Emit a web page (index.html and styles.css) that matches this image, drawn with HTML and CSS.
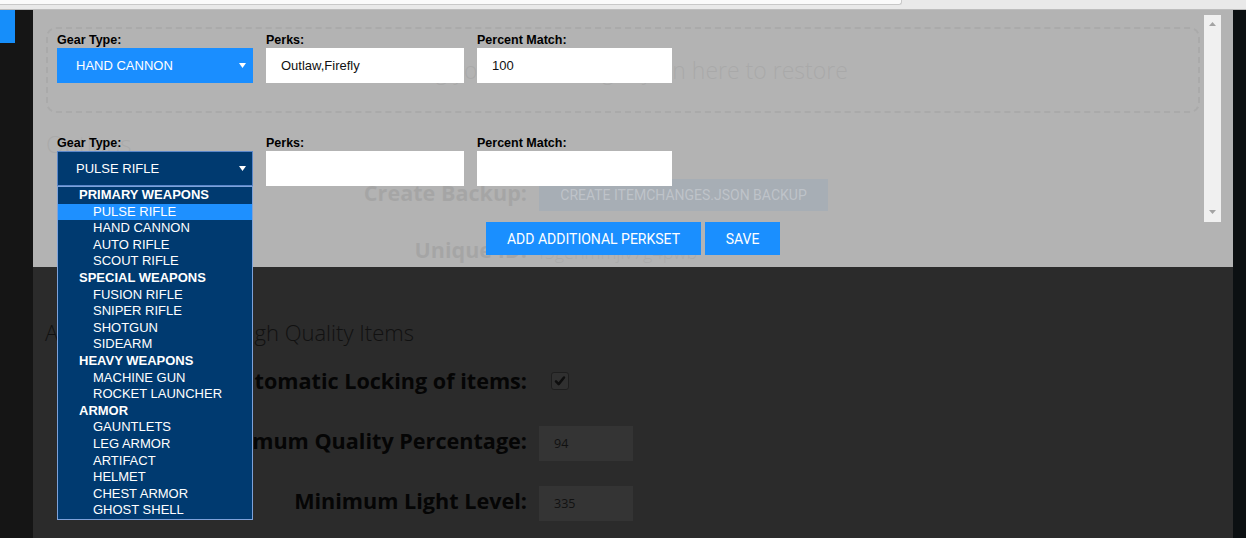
FILE: index.html
```html
<!DOCTYPE html>
<html lang="en">
<head>
<meta charset="utf-8">
<title>Item Locker Options</title>
<link rel="stylesheet" href="styles.css">
</head>
<body>
<div class="browser-bar"><div class="address"></div></div>
<div class="app">
  <aside class="sidebar"><div class="side-tab"></div></aside>
  <main class="page">
    <div class="dropzone">Drag your itemchanges.json here to restore</div>
    <h2 class="section-title">Options</h2>
    <div class="form-row backup-row">
      <label class="form-label">Create Backup:</label>
      <button class="btn-muted">CREATE ITEMCHANGES.JSON BACKUP</button>
    </div>
    <div class="form-row uid-row">
      <label class="form-label">Unique ID:</label>
      <span class="uid">f5gehmmjlv7g4pwb</span>
    </div>
    <h2 class="section-title lock-title">Automatically Lock High Quality Items</h2>
    <div class="form-row lock-row">
      <label class="form-label">Automatic Locking of items:</label>
      <span class="checkbox"><svg width="18" height="18" viewBox="0 0 18 18"><path d="M4.5 9.5 L7.5 12.5 L13.5 5" fill="none" stroke="#0e0e0e" stroke-width="2.8" stroke-linecap="round" stroke-linejoin="round"/></svg></span>
    </div>
    <div class="form-row quality-row">
      <label class="form-label">Minimum Quality Percentage:</label>
      <input class="num-input" type="text" value="94">
    </div>
    <div class="form-row light-row">
      <label class="form-label">Minimum Light Level:</label>
      <input class="num-input" type="text" value="335">
    </div>

    <div class="modal">
      <div class="modal-body">
        <div class="perksets">
          <div class="perkset">
            <div class="field field-gear">
              <div class="field-label">Gear Type:</div>
              <div class="select select-active"><span>HAND CANNON</span><svg class="caret" width="7" height="5" viewBox="0 0 7 5"><path d="M0 0 H7 L3.5 5 Z" fill="#fff"/></svg></div>
            </div>
            <div class="field field-perks">
              <div class="field-label">Perks:</div>
              <input class="text-input" type="text" value="Outlaw,Firefly">
            </div>
            <div class="field field-pct">
              <div class="field-label">Percent Match:</div>
              <input class="text-input" type="text" value="100">
            </div>
          </div>
          <div class="perkset">
            <div class="field field-gear">
              <div class="field-label">Gear Type:</div>
              <div class="select select-open"><span>PULSE RIFLE</span><svg class="caret" width="7" height="5" viewBox="0 0 7 5"><path d="M0 0 H7 L3.5 5 Z" fill="#fff"/></svg></div>
              <ul class="select-menu">
                <li class="grp">PRIMARY WEAPONS</li>
                <li class="opt selected">PULSE RIFLE</li>
                <li class="opt">HAND CANNON</li>
                <li class="opt">AUTO RIFLE</li>
                <li class="opt">SCOUT RIFLE</li>
                <li class="grp">SPECIAL WEAPONS</li>
                <li class="opt">FUSION RIFLE</li>
                <li class="opt">SNIPER RIFLE</li>
                <li class="opt">SHOTGUN</li>
                <li class="opt">SIDEARM</li>
                <li class="grp">HEAVY WEAPONS</li>
                <li class="opt">MACHINE GUN</li>
                <li class="opt">ROCKET LAUNCHER</li>
                <li class="grp">ARMOR</li>
                <li class="opt">GAUNTLETS</li>
                <li class="opt">LEG ARMOR</li>
                <li class="opt">ARTIFACT</li>
                <li class="opt">HELMET</li>
                <li class="opt">CHEST ARMOR</li>
                <li class="opt">GHOST SHELL</li>
              </ul>
            </div>
            <div class="field field-perks">
              <div class="field-label">Perks:</div>
              <input class="text-input" type="text" value="">
            </div>
            <div class="field field-pct">
              <div class="field-label">Percent Match:</div>
              <input class="text-input" type="text" value="">
            </div>
          </div>
        </div>
        <div class="scrollbar">
          <svg width="7" height="4" viewBox="0 0 7 4"><path d="M0 4 L3.5 0 L7 4 Z" fill="#a3a3a3"/></svg>
          <svg width="7" height="4" viewBox="0 0 7 4"><path d="M0 0 L7 0 L3.5 4 Z" fill="#a3a3a3"/></svg>
        </div>
      </div>
      <div class="modal-actions">
        <button class="btn btn-add">ADD ADDITIONAL PERKSET</button>
        <button class="btn btn-save">SAVE</button>
      </div>
    </div>
  </main>
  <aside class="rail"></aside>
</div>
</body>
</html>
```
FILE: styles.css
```css
* { box-sizing: border-box; margin: 0; padding: 0; }
html, body { width: 1246px; height: 538px; overflow: hidden; }
body { background: #151515; font-family: "Open Sans", sans-serif; color: #111; }

.browser-bar { height: 10px; background: #e9e9e9; border-bottom: 1px solid #bdbdbd; }
.address { width: 902px; height: 5px; background: #fafafa; border-bottom: 1px solid #c8c8c8; border-right: 1px solid #c8c8c8; border-bottom-right-radius: 3px; }

.app { display: flex; height: 528px; }
.sidebar { width: 33px; background: #151515; }
.side-tab { width: 15px; height: 33px; background: #168efa; }
.rail { flex: 1; background: #0c1012; }

.page { position: relative; width: 1200px; background: #2b2b2b; padding: 17px 0 0 13px; }

.dropzone { width: 1154px; height: 86px; border: 2px dashed #111; border-radius: 10px; display: flex; align-items: center; justify-content: center; font-size: 23px; font-weight: 300; color: #0e0e0e; }

.section-title { font-size: 24px; font-weight: 300; line-height: 34px; margin-top: 14px; color: #111; }
.lock-title { font-size: 22px; margin-top: 47px; margin-left: -1px; }

.form-row { display: flex; align-items: center; }
.form-label { width: 481px; text-align: right; font-size: 21.6px; font-weight: 700; margin-right: 12px; margin-bottom: 6px; color: #050505; white-space: nowrap; }
.lock-row .form-label { margin-bottom: 0; }

.backup-row { margin-top: 18px; height: 32px; }
.btn-muted { width: 289px; height: 32px; border: none; background: #0a1c30; color: #4a5868; font-family: Roboto, sans-serif; font-size: 14px; }
.uid-row { margin-top: 25px; height: 32px; }
.uid { font-size: 18px; font-weight: 300; color: #111; }

.lock-row { margin-top: 14px; height: 35px; }
.checkbox { width: 18px; height: 18px; margin-left: 12px; border: 1px solid #1e1e1e; border-radius: 3px; background: #303030; display: flex; align-items: center; justify-content: center; }
.checkbox svg { display: block; }
.quality-row { margin-top: 28px; height: 35px; }
.light-row { margin-top: 25px; height: 35px; }
.num-input { width: 94px; height: 35px; border: none; outline: none; background: #343434; padding-left: 15px; font-family: "Open Sans", sans-serif; font-size: 12.5px; color: #111; }

/* modal */
.modal { position: absolute; top: 0; left: 0; width: 1200px; height: 257px; background: rgba(255, 255, 255, 0.642); padding: 5px 12px 0 0; font-family: "Liberation Sans", Arial, sans-serif; }
.modal-body { display: flex; height: 207px; }
.perksets { flex: 1; padding: 18px 0 0 24px; }
.perkset { display: flex; gap: 13px; }
.perkset + .perkset { margin-top: 53px; }
.field-label { font-size: 12.5px; font-weight: 700; line-height: 15px; color: #000; }
.field-gear { width: 196px; position: relative; }
.field-perks { width: 198px; }
.field-pct { width: 195px; }

.select { height: 35px; display: flex; align-items: center; justify-content: space-between; padding: 0 7px 0 19px; font-size: 13px; color: #fff; }
.select-active { background: #1a8eff; }
.select-open { background: #003a70; border: 1px solid #5b87c9; padding: 0 6px 0 18px; }
.caret { display: block; }

.text-input { display: block; width: 100%; height: 35px; border: none; outline: none; background: #fff; padding-left: 15px; font-family: "Liberation Sans", Arial, sans-serif; font-size: 13px; color: #111; }

.select-menu { position: absolute; top: 100%; left: 0; width: 196px; height: 334px; list-style: none; background: #003a70; border: 1px solid #7ea2da; z-index: 5; }
.select-menu li { height: 16.6px; line-height: 16.6px; font-size: 13px; color: #fff; white-space: nowrap; }
.select-menu .grp { font-weight: 700; padding-left: 21px; }
.select-menu .opt { padding-left: 35px; }
.select-menu .selected { background: #1e90ff; }

.scrollbar { width: 17px; height: 207px; background: #f0f0f0; display: flex; flex-direction: column; justify-content: space-between; align-items: center; padding: 7px 0 8px; }
.scrollbar svg { display: block; }

.modal-actions { display: flex; gap: 4px; padding-left: 453px; }
.btn { height: 33px; border: none; background: #1a8fff; color: #fff; font-family: Roboto, sans-serif; font-size: 14px; }
.btn-add { width: 215px; }
.btn-save { width: 75px; }
```
